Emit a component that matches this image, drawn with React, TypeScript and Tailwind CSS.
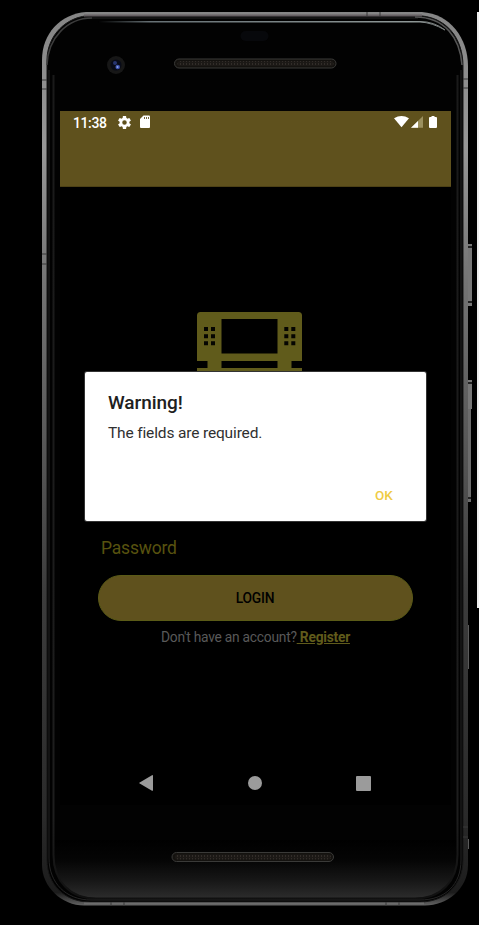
import React from 'react';

const PerforatedSlot = ({ x, y }: { x: number; y: number }) => (
  <g>
    <rect x={x} y={y} width="161.500" height="9" rx="4.500" fill="#14120f" stroke="#3a3a38" strokeWidth="1" />
    <rect x={x + 3} y={y + 2} width="156" height="5" rx="2.500" fill="url(#mesh)" />
  </g>
);

const PhoneFrame = () => (
  <svg className="absolute inset-0" width="479" height="925" viewBox="0 0 479 925" fill="none">
    <defs>
      <linearGradient id="rim" x1="0" y1="12" x2="0" y2="906" gradientUnits="userSpaceOnUse">
        <stop offset="0" stopColor="#858585" />
        <stop offset="0.150" stopColor="#989898" />
        <stop offset="0.300" stopColor="#747474" />
        <stop offset="0.500" stopColor="#555555" />
        <stop offset="0.650" stopColor="#3c3c3c" />
        <stop offset="0.900" stopColor="#2a2a2a" />
        <stop offset="0.985" stopColor="#1c1c1c" />
        <stop offset="1" stopColor="#666666" />
      </linearGradient>
      <linearGradient id="inner" x1="0" y1="70" x2="0" y2="900" gradientUnits="userSpaceOnUse">
        <stop offset="0" stopColor="#1a1a1a" />
        <stop offset="0.900" stopColor="#1e1e1e" />
        <stop offset="1" stopColor="#101010" />
      </linearGradient>
      <linearGradient id="chin" x1="0" y1="840" x2="0" y2="898" gradientUnits="userSpaceOnUse">
        <stop offset="0" stopColor="#000000" />
        <stop offset="0.350" stopColor="#050505" />
        <stop offset="0.700" stopColor="#171717" />
        <stop offset="1" stopColor="#2c2c2c" />
      </linearGradient>
      <linearGradient id="shine" x1="98" y1="0" x2="446" y2="0" gradientUnits="userSpaceOnUse">
        <stop offset="0" stopColor="#000000" />
        <stop offset="0.150" stopColor="#667074" />
        <stop offset="0.900" stopColor="#8f9897" />
        <stop offset="1" stopColor="#777b7b" />
      </linearGradient>
      <pattern id="mesh" width="3" height="3" patternUnits="userSpaceOnUse">
        <rect width="3" height="3" fill="#1c1916" />
        <rect width="1" height="2" fill="#322d29" />
      </pattern>
    </defs>
    <rect x="468" y="244" width="4" height="62" fill="#777777" />
    <path d="M468 247h4M468 302h4" stroke="#222222" strokeWidth="2" />
    <rect x="468" y="380" width="4" height="29" fill="#777777" />
    <rect x="468" y="409" width="3" height="93" fill="#6c6c6c" />
    <path d="M468 383h4M468 498h3" stroke="#222222" strokeWidth="2" />
    <path d="M468.500 625v44M468.500 839v10" stroke="#5b5b5b" />
    <path d="M86 12H422C450 14 468 38 468 66V865C468 889 447 905.500 425 905.500H84C62 905.500 42 887 42 865V60C42 34 60 14 86 12Z" fill="url(#rim)" />
    <path d="M92 15.500H415C447 15.500 463 39 463 66V860C463 886 444 902 420 902H90C65 902 47 885 47 860V60C47 36 66 15.500 92 15.500Z" fill="#020202" stroke="#171717" />
    <path d="M84 15.500H422" stroke="#655f62" strokeWidth="2" />
    <path d="M84 18H418" stroke="#252525" />
    <path d="M84 903.500H424" stroke="#6c6c6c" strokeWidth="2" />
    <path d="M54 840H457V855C457 881 441 898 415 898H96C70 898 54 881 54 855Z" fill="url(#chin)" />
    <path d="M53.500 75V855C53.500 881 70 898.500 96 898.500H415C441 898.500 457.500 881 457.500 855V75" stroke="url(#inner)" strokeWidth="2" />
    <path d="M49 70V858C49 883 66 900 91 900H420C445 900 461 885 461 860V70" stroke="#242424" />
    <path d="M47 65C48 38 67 18 92 18" stroke="#3c3c3c" strokeWidth="1.500" />
    <path d="M415 17C445 17 460 38 462 65" stroke="#555555" strokeWidth="1.500" />
    <path d="M98 21.500H420Q434 21.500 445 30Q432 22.500 420 22H98Z" stroke="url(#shine)" />
    <path d="M42 80h5M42 89h5M463 79h5M463 88h5M42 254h5M42 264h5M463 827h5M463 837h5M367 12v4M380 12v4M111 902v4M124 902v4M386 902v4M399 902v4" stroke="#393939" />
    <rect x="240.500" y="31" width="28" height="10" rx="5" fill="#07080b" />
    <circle cx="116" cy="65" r="9" fill="#171717" />
    <circle cx="116" cy="65" r="5.500" fill="#080b18" />
    <circle cx="115" cy="63" r="2" fill="#26346f" />
    <circle cx="117.700" cy="67" r="2.300" fill="#3c50a8" />
    <circle cx="117.500" cy="67" r="1" fill="#8ba3ef" />
    <PerforatedSlot x={174.500} y={59} />
    <PerforatedSlot x={172} y={852.500} />
  </svg>
);

const StatusBar = () => (
  <div className="flex h-6 items-center text-white">
    <span className="-mt-px ml-[13px] w-[44.500px] text-[14px] font-medium leading-6 tracking-[-0.400px]">11:38</span>
    <svg width="13" height="13" viewBox="2 2 20 20" fill="currentColor" className="-mt-[2px]">
      <path d="M19.430 12.980c.04-.32.070-.64.070-.98s-.03-.66-.07-.98l2.110-1.650c.19-.15.240-.42.120-.64l-2-3.460c-.12-.22-.39-.3-.61-.22l-2.490 1c-.52-.4-1.080-.73-1.690-.98l-.38-2.650A.488.488 0 0 0 14 2h-4c-.25 0-.46.180-.49.420l-.38 2.650c-.61.250-1.170.590-1.690.980l-2.490-1c-.23-.09-.49 0-.61.220l-2 3.460c-.13.220-.07.490.12.640l2.110 1.650c-.04.320-.07.650-.07.980s.03.660.070.980l-2.110 1.650c-.19.150-.24.420-.12.640l2 3.460c.12.220.39.300.61.220l2.490-1c.52.400 1.080.730 1.690.980l.38 2.650c.03.240.24.420.49.420h4c.25 0 .46-.18.490-.42l.38-2.650c.61-.25 1.170-.59 1.690-.98l2.490 1c.23.090.49 0 .61-.22l2-3.460c.12-.22.070-.49-.12-.64l-2.110-1.650ZM12 15.500A3.500 3.500 0 1 1 12 8.500a3.500 3.500 0 0 1 0 7Z" />
    </svg>
    <svg width="10" height="13" viewBox="0 0 10 13" className="-mt-[3px] ml-[9.500px]">
      <path d="M3.500.5H9q1 0 1 1V12q0 1-1 1H1q-1 0-1-1V4Z" fill="currentColor" />
      <path d="M4.500 2v2M6.500 2v2M8.500 2v2" stroke="#655728" strokeWidth=".9" />
    </svg>
    <svg width="44" height="14" viewBox="0 0 44 14" className="-mt-[2px] ml-auto mr-[13px]">
      <path d="M0 3.200Q7.500-1.200 15 3.200L7.500 12.300Z" fill="currentColor" />
      <path d="M17 12.800 29 1V12.800Z" fill="#9b905f" />
      <path d="M17 12.800 24 6V12.800Z" fill="currentColor" />
      <path d="M37.500 1h3v1h1.500q1 0 1 1v9q0 1-1 1h-6q-1 0-1-1V3q0-1 1-1h1.500Z" fill="currentColor" />
    </svg>
  </div>
);

const ConsoleLogo = () => (
  <svg width="105" height="80" viewBox="0 0 105 80" fill="#605b1b">
    <path fillRule="evenodd" d="M3.500 0H101.500Q105 0 105 3.500V49H94.500V56H105V80H0V56H10.500V49H0V3.500Q0 0 3.500 0ZM24.500 7V41.500H80.500V7ZM24.500 49V56H80.500V49Z" />
    <path d="M7 15h4v4H7zM14 15h4v4h-4zM7 22.300h4v4H7zM14 22.300h4v4h-4zM7 29.300h4v4H7zM14 29.300h4v4h-4zM87.300 15h4v4h-4zM94.300 15h4v4h-4zM87.300 22.300h4v4h-4zM94.300 22.300h4v4h-4zM87.300 29.300h4v4h-4zM94.300 29.300h4v4h-4z" fill="#050501" />
  </svg>
);

const WarningDialog = () => (
  <div role="dialog" className="absolute left-[25px] top-[261px] flex h-[149px] w-[340.500px] flex-col rounded-[2px] bg-white pl-[23px] pt-[18px] shadow-[0_0_0_1px_#333333]">
    <h1 className="text-[19px] font-medium leading-[26px] tracking-[-0.050px] text-[#202020]">Warning!</h1>
    <p className="mt-1 text-[15.500px] leading-[26px] tracking-[-0.150px] text-[#303030]">The fields are required.</p>
    <button className="mb-[14px] ml-auto mr-[33px] mt-auto text-[13.500px] font-medium leading-6 tracking-[-0.200px] text-[#efcb44]">OK</button>
  </div>
);

export default function App() {
  return (
    <main className="relative h-[925px] w-[479px] overflow-hidden bg-black pl-[60px] pt-[111px] font-['Roboto',sans-serif]">
      <PhoneFrame />
      <div className="absolute right-0 top-3 h-[596px] w-[2px] bg-[#efefef]" />
      <section className="relative flex h-[694px] w-[391px] flex-col bg-black">
        <header className="h-[76px] shrink-0 border-b border-[#4d4116] bg-[#5f511d]">
          <StatusBar />
        </header>
        <div className="mt-[124.500px] flex shrink-0 justify-center pr-[12.500px]">
          <ConsoleLogo />
        </div>
        <label className="ml-[41px] mt-[143.500px] text-[17.500px] leading-[26px] tracking-[-0.200px] text-[#58520f]">Password</label>
        <button className="ml-[37.500px] mt-[13.500px] h-[46.500px] w-[315px] shrink-0 rounded-full border border-[#5b5b17] bg-[#5f511d] pt-px text-[13.800px] font-medium tracking-[-0.200px] text-black">LOGIN</button>
        <p className="mt-[5.500px] whitespace-nowrap text-center text-[13.800px] leading-5 tracking-[-0.250px] text-[#595959]">
          Don't have an account?<a className="font-bold text-[#605b1b] underline"> Register</a>
        </p>
        <nav className="mt-auto flex h-[44px] items-center justify-between pl-[79px] pr-[80px]">
          <svg width="14" height="16" viewBox="0 0 14 16" fill="#9b9b9b"><path d="M13 .2Q14-.2 14 1V15Q14 16.200 13 15.700L.7 8.600Q-.3 8 .7 7.400Z" /></svg>
          <span className="size-[14px] rounded-full bg-[#9b9b9b]" />
          <span className="size-[15px] rounded-[1px] bg-[#9b9b9b]" />
        </nav>
        <WarningDialog />
      </section>
    </main>
  );
}
